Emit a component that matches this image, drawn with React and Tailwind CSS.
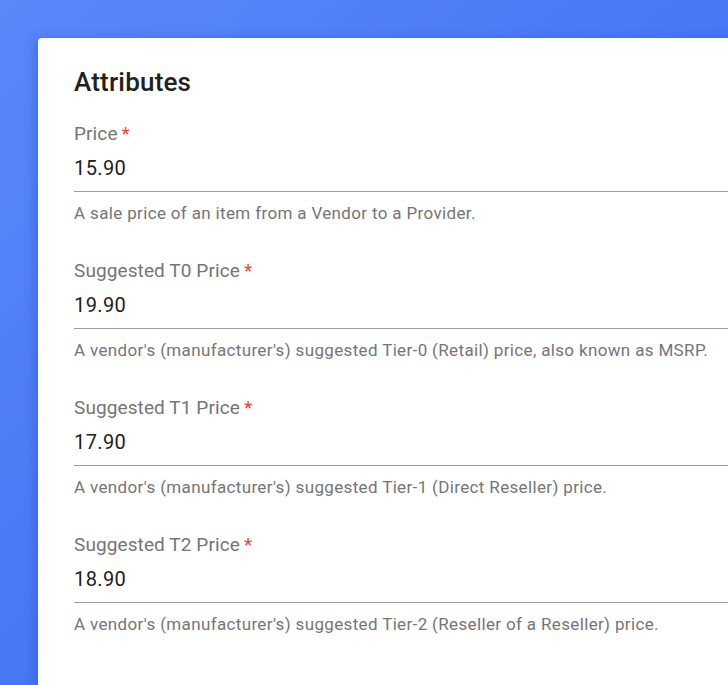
const fields = [
  {
    label: 'Price',
    value: '15.90',
    help: 'A sale price of an item from a Vendor to a Provider.',
  },
  {
    label: 'Suggested T0 Price',
    value: '19.90',
    help: "A vendor's (manufacturer's) suggested Tier-0 (Retail) price, also known as MSRP.",
  },
  {
    label: 'Suggested T1 Price',
    value: '17.90',
    help: "A vendor's (manufacturer's) suggested Tier-1 (Direct Reseller) price.",
  },
  {
    label: 'Suggested T2 Price',
    value: '18.90',
    help: "A vendor's (manufacturer's) suggested Tier-2 (Reseller of a Reseller) price.",
  },
];

function Field({ label, value, help }) {
  return (
    <div>
      <div className="text-[19px] leading-6 tracking-[0.1px] text-[#757575]">
        {label}
        <span className="ml-1 text-[#f44336]">*</span>
      </div>
      <div className="mt-2 border-b border-[#9e9e9e] pb-[9px] text-[20px] leading-7 tracking-[0.4px] text-[#212121]">
        {value}
      </div>
      <div className="mt-[9px] whitespace-nowrap text-[17px] leading-6 tracking-[0.35px] text-[#757575]">
        {help}
      </div>
    </div>
  );
}

export default function App() {
  return (
    <div
      className="h-[685px] w-[728px] overflow-hidden bg-gradient-to-br from-[#5a88f8] to-[#3b65f5] pl-[38px] pt-[38px]"
      style={{ fontFamily: 'Roboto, "Liberation Sans", sans-serif' }}
    >
      <div className="h-[700px] w-[720px] rounded-tl-[4px] bg-white pl-9 pt-[28px] shadow-[-4px_0_10px_rgba(30,50,150,0.25)]">
        <h2 className="text-[26px] font-medium leading-8 tracking-[0.2px] text-[#212121]">Attributes</h2>
        <div className="mt-6 flex flex-col gap-[34px]">
          {fields.map((f) => (
            <Field key={f.label} {...f} />
          ))}
        </div>
      </div>
    </div>
  );
}
